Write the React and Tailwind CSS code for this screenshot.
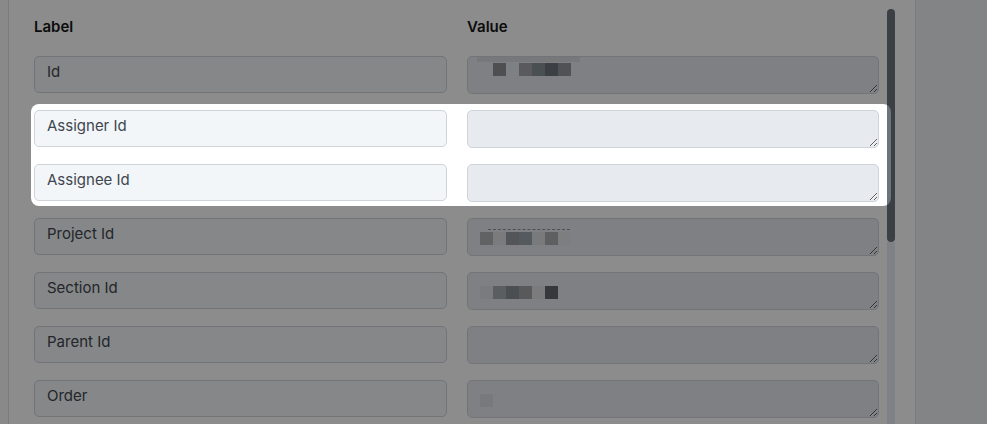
import React from 'react';

// pixelated (redacted) values, one entry per 13px cell; null = empty cell
const ROWS = [
  { label: 'Id', top: 'bar', cells: [null, '#909195', null, '#a4a5ab', '#889095', '#6d747a', '#93959b'] },
  { label: 'Assigner Id', spot: true },
  { label: 'Assignee Id', spot: true },
  { label: 'Project Id', top: 'dash', cells: ['#b0b2b6', '#e0e1e5', '#999ba0', '#99a4ab', '#dcdee2', '#abadb0', '#e3e5e9'] },
  { label: 'Section Id', cells: ['#dee0e4', '#a5abb0', '#8a9095', '#a0a2a7', '#e0e1e5', '#62686d'] },
  { label: 'Parent Id' },
  { label: 'Order', cells: ['#dadce0'] },
];

function ValueBox({ row }) {
  return (
    <div className="h-[38px] w-[412px] shrink-0 resize-y overflow-hidden rounded-[5px] border border-[#cfd3da] bg-[#e7eaee]">
      {row.top === 'bar' && <div className="ml-[9px] h-[5px] w-[103px] bg-[#d8dadd]" />}
      {row.top === 'dash' && (
        <div className="ml-[20px] mt-[10px] h-0 w-[82px] border-t border-dashed border-[#909194]" />
      )}
      {row.cells && (
        <div className={`flex pl-3 ${row.top === 'bar' ? 'mt-px' : row.top === 'dash' ? 'mt-[2px]' : 'mt-[13px]'}`}>
          {row.cells.map((c, i) => (
            <span key={i} className="block h-[13px] w-[13px]" style={{ background: c || 'transparent' }} />
          ))}
        </div>
      )}
    </div>
  );
}

function Row({ row }) {
  return (
    <div className="flex items-start gap-5">
      <div className="h-[37px] w-[413px] shrink-0 rounded-[5px] border border-[#cfd3da] bg-[#f3f6f9] px-3 pt-[5px] text-[15px] leading-5 text-[#40464e]">
        {row.label}
      </div>
      <ValueBox row={row} />
    </div>
  );
}

export default function App() {
  const before = ROWS.slice(0, 1);
  const spot = ROWS.filter((r) => r.spot);
  const after = ROWS.slice(3);

  return (
    <div className="relative flex h-[424px] w-[987px] overflow-hidden bg-[#fafafa] pl-2 font-['Inter',sans-serif]">
      <div className="flex w-[908px] shrink-0 border-x border-[#dae2ee] bg-white">
        <div className="w-[870px] shrink-0 pl-[25px] pt-[17px]">
          <div className="mb-[19px] flex gap-5 text-[15px] font-semibold leading-5 text-[#161616]">
            <div className="w-[413px]">Label</div>
            <div>Value</div>
          </div>
          <div className="flex flex-col gap-4">
            {before.map((r) => <Row key={r.label} row={r} />)}
            <div className="relative flex flex-col gap-4">
              {/* tour spotlight: cut-out with dimmed backdrop */}
              <div className="pointer-events-none absolute -bottom-[4px] -left-[3px] -right-[12px] -top-[6px] z-50 rounded-lg shadow-[0_0_0_9999px_rgba(0,0,0,0.45)]" />
              {spot.map((r) => <Row key={r.label} row={r} />)}
            </div>
            {after.map((r) => <Row key={r.label} row={r} />)}
          </div>
        </div>
        <div className="ml-[8px] mt-[9px] flex w-2 shrink-0 flex-col">
          <div className="h-[233px] rounded-full bg-[#6c757d]" />
          <div className="flex-1 bg-[#e5edf5]" />
        </div>
      </div>
      <div className="flex-1 bg-[#edf1f5]" />
    </div>
  );
}
